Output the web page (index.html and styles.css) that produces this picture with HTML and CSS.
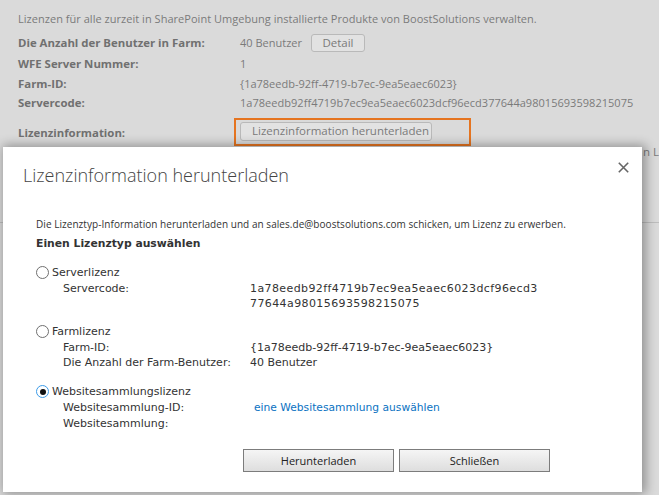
FILE: index.html
```html
<!DOCTYPE html>
<html lang="de">
<head>
<meta charset="utf-8">
<title>Lizenzinformation herunterladen</title>
<link rel="stylesheet" href="styles.css">
</head>
<body>
<div class="page">
  <p class="intro">Lizenzen für alle zurzeit in SharePoint Umgebung installierte Produkte von BoostSolutions verwalten.</p>
  <div class="info">
    <div class="row r-users"><span class="lbl">Die Anzahl der Benutzer in Farm:</span><span class="val">40 Benutzer <span class="bgbtn detail">Detail</span></span></div>
    <div class="row r-wfe"><span class="lbl">WFE Server Nummer:</span><span class="val">1</span></div>
    <div class="row r-farm"><span class="lbl">Farm-ID:</span><span class="val">{1a78eedb-92ff-4719-b7ec-9ea5eaec6023}</span></div>
    <div class="row r-code"><span class="lbl">Servercode:</span><span class="val">1a78eedb92ff4719b7ec9ea5eaec6023dcf96ecd377644a98015693598215075</span></div>
    <div class="row r-lic"><span class="lbl">Lizenzinformation:</span><span class="val"><span class="highlight"><span class="bgbtn dl">Lizenzinformation herunterladen</span></span></span></div>
  </div>
  <div class="more"><span class="more-text">Details zu den Lizenzen anzeigen und verwalten</span><span class="more-end">n L</span></div>
  <div class="rule"></div>
</div>

<div class="dialog">
  <div class="dlg-head">
    <h1 class="dlg-title">Lizenzinformation herunterladen</h1>
    <span class="close" aria-label="Schließen"><svg width="11" height="11" viewBox="0 0 11 11"><path d="M0.8 0.8 L10.2 10.2 M10.2 0.8 L0.8 10.2" stroke="#666" stroke-width="1.6" fill="none"/></svg></span>
  </div>
  <div class="dlg-body">
    <p class="desc">Die Lizenztyp-Information herunterladen und an sales.de@boostsolutions.com schicken, um Lizenz zu erwerben.</p>
    <p class="choose">Einen Lizenztyp auswählen</p>

    <div class="group">
      <div class="opt"><span class="radio"></span><span>Serverlizenz</span></div>
      <div class="sub">
        <span class="k">Servercode:</span><span class="v code">1a78eedb92ff4719b7ec9ea5eaec6023dcf96ecd3<br>77644a98015693598215075</span>
      </div>
    </div>

    <div class="group">
      <div class="opt"><span class="radio"></span><span>Farmlizenz</span></div>
      <div class="sub">
        <span class="k">Farm-ID:</span><span class="v">{1a78eedb-92ff-4719-b7ec-9ea5eaec6023}</span>
        <span class="k">Die Anzahl der Farm-Benutzer:</span><span class="v">40 Benutzer</span>
      </div>
    </div>

    <div class="group">
      <div class="opt"><span class="radio checked"></span><span>Websitesammlungslizenz</span></div>
      <div class="sub tall">
        <span class="k">Websitesammlung-ID:</span><span class="v"><a class="link" href="#">eine Websitesammlung auswählen</a></span>
        <span class="k">Websitesammlung:</span><span class="v"></span>
      </div>
    </div>

    <div class="actions">
      <button class="btn" type="button">Herunterladen</button>
      <button class="btn" type="button">Schließen</button>
    </div>
  </div>
</div>
</body>
</html>
```
FILE: styles.css
```css
html, body {
  margin: 0;
  padding: 0;
}
body {
  width: 659px;
  height: 495px;
  overflow: hidden;
  background: #dadada;
  font-family: "Open Sans", "Liberation Sans", sans-serif;
  color: #7a7a7a;
  position: relative;
}
.page {
  padding: 9px 0 0 18px;
}
.intro {
  margin: 0;
  font-size: 11px;
  letter-spacing: 0.03px;
  line-height: 20px;
  white-space: nowrap;
}
.info {
  display: flex;
  flex-direction: column;
  margin-top: 3px;
  font-size: 11px;
}
.row {
  display: grid;
  grid-template-columns: 222px auto;
  align-items: center;
  white-space: nowrap;
}
.r-users { height: 21px; }
.r-wfe { height: 20px; }
.r-farm { height: 20px; }
.r-code { height: 19px; }
.r-lic { height: 30px; margin-top: 5px; }
.lbl {
  font-weight: 700;
  font-size: 11.4px;
  color: #707070;
}
.val {
  display: flex;
  align-items: center;
  gap: 9px;
}
.r-code .val {
  letter-spacing: 0.03px;
}
.bgbtn {
  display: inline-block;
  border: 1px solid #b9b9b9;
  border-radius: 3px;
  background: #e2e2e2;
  color: #7a7a7a;
  line-height: 16px;
  font-size: 11.5px;
}
.detail {
  padding: 0 10px;
  width: 32px;
  text-align: center;
}
.highlight {
  display: inline-block;
  border: 2px solid #e57420;
  padding: 2px 37px 3px 4px;
  margin-left: -6px;
}
.dl {
  padding: 0 11px 1px;
  width: 168px;
  text-align: center;
}
.more {
  display: flex;
  justify-content: flex-end;
  margin-top: -3px;
  margin-left: -18px;
  font-size: 11.5px;
  line-height: 16px;
  white-space: nowrap;
  overflow: hidden;
}
.more-text {
  flex: 1;
  padding-left: 22px;
}
.more-end {
  width: 16px;
}
.rule {
  margin-top: 62px;
  margin-left: -18px;
  border-top: 1px solid #bdbdbd;
}

.dialog {
  position: absolute;
  left: 3px;
  top: 147px;
  width: 639px;
  height: 345px;
  background: #ffffff;
  box-shadow: 2px 0 10px 2px rgba(0, 0, 0, 0.33);
  color: #333;
}
.dlg-head {
  display: flex;
  justify-content: space-between;
  align-items: flex-start;
  padding: 13px 10px 0 20px;
}
.dlg-title {
  margin: 0;
  font-family: "Open Sans", "Liberation Sans", sans-serif;
  font-weight: 300;
  font-size: 18px;
  line-height: 30px;
  color: #444;
}
.close {
  display: flex;
  margin-top: -1px;
  padding: 3px;
}
.dlg-body {
  padding: 25px 0 0 33px;
}
.desc {
  margin: 0;
  font-family: "Open Sans", "Liberation Sans", sans-serif;
  font-size: 10px;
  letter-spacing: 0.05px;
  line-height: 18px;
  color: #333;
}
.choose {
  margin: 2px 0 11px;
  font-family: "DejaVu Sans", Verdana, sans-serif;
  font-weight: 700;
  font-size: 10.8px;
  line-height: 18px;
  color: #333;
}
.group {
  margin-bottom: 12px;
  font-family: "DejaVu Sans", Verdana, sans-serif;
  font-size: 11px;
  color: #333;
}
.group:nth-of-type(2) {
  margin-bottom: 13px;
}
.opt {
  display: flex;
  align-items: center;
  gap: 3px;
  height: 17px;
}
.radio {
  width: 11px;
  height: 11px;
  border: 1px solid #6f6f6f;
  border-radius: 50%;
  background: #fff;
  box-sizing: content-box;
  position: relative;
}
.radio.checked {
  border-color: #3c9be8;
}
.radio.checked::after {
  content: "";
  position: absolute;
  left: 2.5px;
  top: 2.5px;
  width: 6px;
  height: 6px;
  border-radius: 50%;
  background: #111;
}
.sub {
  display: grid;
  grid-template-columns: 187px auto;
  line-height: 15px;
  padding-left: 27px;
  white-space: nowrap;
}
.sub.tall {
  line-height: 16px;
}
.code {
  letter-spacing: 0.4px;
}
.link {
  margin-left: 4px;
  color: #0a72c2;
  text-decoration: none;
  font-family: "DejaVu Sans", Verdana, sans-serif;
  font-size: 10.7px;
}
.actions {
  display: flex;
  gap: 5px;
  margin-top: 17px;
  padding-left: 207px;
}
.btn {
  width: 151px;
  height: 23px;
  border: 1px solid #7c7c7c;
  background: linear-gradient(#f5f5f5, #dedede);
  font-family: "Open Sans", "Liberation Sans", sans-serif;
  font-size: 11px;
  color: #222;
  padding: 0;
}
```
